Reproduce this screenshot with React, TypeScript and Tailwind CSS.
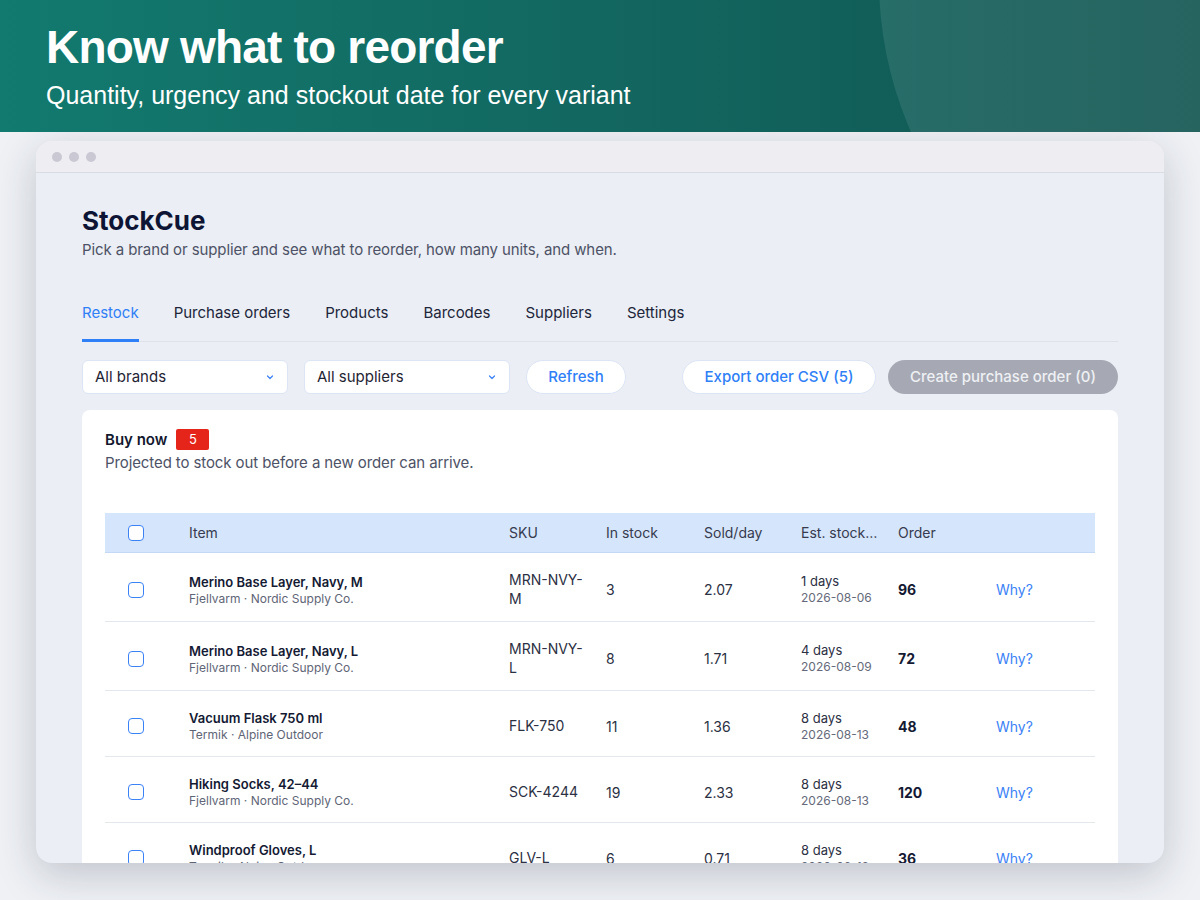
import React from "react";

type Row = {
  name: string;
  brand: string;
  sku: string[];
  stock: string;
  sold: string;
  days: string;
  date: string;
  order: string;
};

const rows: Row[] = [
  { name: "Merino Base Layer, Navy, M", brand: "Fjellvarm · Nordic Supply Co.", sku: ["MRN-NVY-", "M"], stock: "3", sold: "2.07", days: "1 days", date: "2026-08-06", order: "96" },
  { name: "Merino Base Layer, Navy, L", brand: "Fjellvarm · Nordic Supply Co.", sku: ["MRN-NVY-", "L"], stock: "8", sold: "1.71", days: "4 days", date: "2026-08-09", order: "72" },
  { name: "Vacuum Flask 750 ml", brand: "Termik · Alpine Outdoor", sku: ["FLK-750"], stock: "11", sold: "1.36", days: "8 days", date: "2026-08-13", order: "48" },
  { name: "Hiking Socks, 42–44", brand: "Fjellvarm · Nordic Supply Co.", sku: ["SCK-4244"], stock: "19", sold: "2.33", days: "8 days", date: "2026-08-13", order: "120" },
  { name: "Windproof Gloves, L", brand: "Termik · Alpine Outdoor", sku: ["GLV-L"], stock: "6", sold: "0.71", days: "8 days", date: "2026-08-13", order: "36" },
];

const grid = "grid grid-cols-[84px_320px_97px_98px_97px_97px_98px_1fr] items-center";

function Checkbox() {
  return <div className="ml-[23px] h-[16px] w-[16px] rounded-[4px] border-[1.5px] border-[#3b82f6] bg-white" />;
}

function Select({ label }: { label: string }) {
  return (
    <div className="flex h-[34px] w-[206px] items-center justify-between rounded-[6px] border border-[#dbe5f5] bg-white pl-[12px] pr-[12px]">
      <span className="text-[15px] text-[#1f2433]">{label}</span>
      <svg width="10" height="10" viewBox="0 0 10 10" fill="none">
        <path d="M2.5 4l2.5 2.5L7.5 4" stroke="#3b82f6" strokeWidth="1.2" strokeLinecap="round" strokeLinejoin="round" />
      </svg>
    </div>
  );
}

export default function App() {
  return (
    <div className="relative h-[900px] w-[1200px] overflow-hidden bg-[#eff1f5]" style={{ fontFamily: "Inter, 'Noto Sans', sans-serif" }}>
      {/* Hero band */}
      <div className="relative h-[132px] overflow-hidden bg-gradient-to-r from-[#127a6f] to-[#115551]">
        <div className="absolute left-[879px] top-[-397px] h-[754px] w-[754px] rounded-full bg-[#ffffff]/[0.09]" />
        <div className="relative pl-[46px] pt-[21px] text-white" style={{ fontFamily: "'Liberation Sans', Arial, sans-serif" }}>
          <div className="text-[46px] font-bold leading-[52px] tracking-[-0.8px]">Know what to reorder</div>
          <div className="mt-[7px] text-[25px] leading-[30px]">Quantity, urgency and stockout date for every variant</div>
        </div>
      </div>

      {/* Browser window */}
      <div className="mx-[36px] mt-[9px] h-[722px] overflow-hidden rounded-[16px] bg-[#ebeef4] shadow-[0_12px_40px_rgba(30,40,60,0.22)]">
        <div className="flex h-[32px] items-center gap-[7px] border-b border-[#d9dce4] bg-[#eeedf2] pl-[16px]">
          <span className="h-[10px] w-[10px] rounded-full bg-[#c9c8d3]" />
          <span className="h-[10px] w-[10px] rounded-full bg-[#c9c8d3]" />
          <span className="h-[10px] w-[10px] rounded-full bg-[#c9c8d3]" />
        </div>

        <div className="px-[46px] pt-[32px]">
          <div className="text-[26px] font-bold leading-[32px] text-[#0d1434]">StockCue</div>
          <div className="mt-[3px] text-[15px] leading-[20px] tracking-[-0.1px] text-[#4d5266]">Pick a brand or supplier and see what to reorder, how many units, and when.</div>

          {/* Tabs */}
          <div className="mt-[43px] flex gap-[35px] border-b border-[#dde2ea] text-[15px] leading-[20px] text-[#20253a]">
            <div className="-mb-px border-b-[3px] border-[#2f7ff7] pb-[15px] text-[#2f7ff7]">Restock</div>
            <div className="pb-[18px]">Purchase orders</div>
            <div className="pb-[18px]">Products</div>
            <div className="pb-[18px]">Barcodes</div>
            <div className="pb-[18px]">Suppliers</div>
            <div className="pb-[18px]">Settings</div>
          </div>

          {/* Filters */}
          <div className="mt-[18px] flex items-center">
            <Select label="All brands" />
            <div className="ml-[16px]"><Select label="All suppliers" /></div>
            <div className="ml-[16px] flex h-[34px] w-[100px] items-center justify-center rounded-full border border-[#dbe5f5] bg-white text-[15px] font-medium text-[#2f7ff7]">Refresh</div>
            <div className="ml-auto flex h-[34px] w-[194px] items-center justify-center rounded-full border border-[#dbe5f5] bg-white text-[15px] font-medium text-[#2f7ff7]">Export order CSV (5)</div>
            <div className="ml-[12px] flex h-[34px] w-[230px] items-center justify-center rounded-full bg-[#a6a9b3] text-[15px] font-medium text-[#eef0f4]">Create purchase order (0)</div>
          </div>

          {/* Card */}
          <div className="mt-[16px] rounded-[8px] bg-white px-[23px] pt-[19px] pb-[20px]">
            <div className="flex items-center">
              <span className="text-[15px] font-semibold leading-[20px] text-[#12172e]">Buy now</span>
              <span className="ml-[9px] flex h-[21px] w-[33px] items-center justify-center rounded-[2px] bg-[#e5241a] text-[13px] text-white">5</span>
            </div>
            <div className="mt-[3px] text-[15px] leading-[20px] tracking-[-0.1px] text-[#4d5266]">Projected to stock out before a new order can arrive.</div>

            <div className="mt-[40px]">
              <div className={`${grid} h-[40px] border-b border-[#c3d7f7] bg-[#d5e5fb] text-[14px] text-[#363b4f]`}>
                <Checkbox />
                <div>Item</div>
                <div>SKU</div>
                <div>In stock</div>
                <div>Sold/day</div>
                <div>Est. stock…</div>
                <div>Order</div>
                <div />
              </div>
              {rows.map((r, i) => (
                <div key={i} className={`${grid} border-b border-[#e3e7ee] pt-[18px] pb-[13px]`}>
                  <Checkbox />
                  <div>
                    <div className="text-[13px] font-semibold leading-[18px] text-[#141a33]">{r.name}</div>
                    <div className="text-[12px] leading-[16px] text-[#606576]">{r.brand}</div>
                  </div>
                  <div className="text-[14px] leading-[18.5px] text-[#2b3043]">
                    {r.sku.map((s, j) => (
                      <div key={j}>{s}</div>
                    ))}
                  </div>
                  <div className="text-[14px] text-[#2b3043]">{r.stock}</div>
                  <div className="text-[14px] text-[#2b3043]">{r.sold}</div>
                  <div>
                    <div className="text-[13px] leading-[17px] text-[#2b3043]">{r.days}</div>
                    <div className="text-[12px] leading-[16px] text-[#656a7a]">{r.date}</div>
                  </div>
                  <div className="text-[14px] font-bold text-[#141a33]">{r.order}</div>
                  <div className="text-[14px] text-[#3b82f6]">Why?</div>
                </div>
              ))}
            </div>
          </div>
        </div>
      </div>
    </div>
  );
}
